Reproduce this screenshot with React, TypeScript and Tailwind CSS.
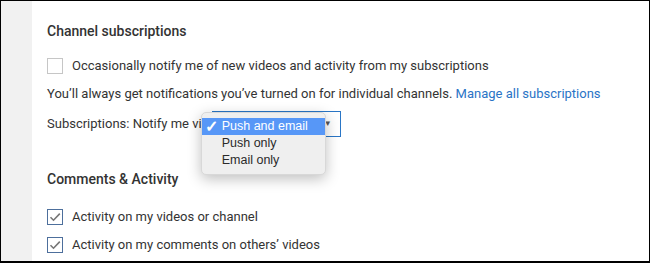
import React from "react"

const font = { fontFamily: "Roboto, 'Liberation Sans', sans-serif" }

function Checkbox({ checked }: { checked?: boolean }) {
  return (
    <span
      className={
        "w-4 h-4 shrink-0 border flex items-center justify-center bg-white " +
        (checked ? "border-[#4d6f9c]" : "border-[#c6c6c6]")
      }
    >
      {checked && (
        <svg width="12" height="10" viewBox="0 0 12 10">
          <path d="M1.5 5.2 L4.5 8.2 L10.8 1.6" fill="none" stroke="#767676" strokeWidth="1.6" />
        </svg>
      )}
    </span>
  )
}

export default function App() {
  return (
    <div className="w-[650px] h-[263px] bg-white border border-black border-b-2 flex overflow-hidden" style={font}>
      <div className="w-[31px] shrink-0 bg-[#f1f1f1]" />
      <div className="flex-1 pl-[15px] text-[13px] text-[#333]">
        <h2 className="mt-[20px] text-[14px] leading-[20px] font-medium text-[#333]">Channel subscriptions</h2>

        <label className="mt-[16px] flex items-center gap-[9px] h-[18px]">
          <Checkbox />
          <span>Occasionally notify me of new videos and activity from my subscriptions</span>
        </label>

        <p className="mt-[10px] leading-[18px]">
          You’ll always get notifications you’ve turned on for individual channels.{" "}
          <a className="text-[#2a74c6]">Manage all subscriptions</a>
        </p>

        <div className="mt-[8px] flex items-center h-[26px]">
          <span>Subscriptions: Notify me via</span>
          <div className="relative ml-[3px]">
            <div className="w-[129px] h-[26px] border border-[#2a76c6] bg-white flex items-center justify-end px-2">
              <span className="text-[8px] text-[#555]">▼</span>
            </div>
            {/* open select menu */}
            <div
              className="absolute left-[-11px] top-[1px] w-[125px] rounded-[5px] bg-[#efefef] py-[5px] shadow-[0_4px_14px_rgba(0,0,0,0.25)] border border-[#d8d8d8] text-[12.5px] text-[#2a2a2a]"
              style={{ fontFamily: "'Liberation Sans', Arial, sans-serif" }}
            >
              <div className="h-[17px] leading-[17px] bg-[#5797f7] text-white flex items-center">
                <span className="w-[20px] pl-[3px] text-[16px] font-bold">✓</span>
                <span>Push and email</span>
              </div>
              <div className="h-[17px] leading-[17px] pl-[20px]">Push only</div>
              <div className="h-[17px] leading-[17px] pl-[20px]">Email only</div>
            </div>
          </div>
        </div>

        <h2 className="mt-[32px] text-[14px] leading-[20px] font-medium text-[#333]">Comments &amp; Activity</h2>

        <label className="mt-[19px] flex items-center gap-[9px] h-[18px]">
          <Checkbox checked />
          <span>Activity on my videos or channel</span>
        </label>
        <label className="mt-[10px] flex items-center gap-[9px] h-[18px]">
          <Checkbox checked />
          <span>Activity on my comments on others’ videos</span>
        </label>
      </div>
    </div>
  )
}
